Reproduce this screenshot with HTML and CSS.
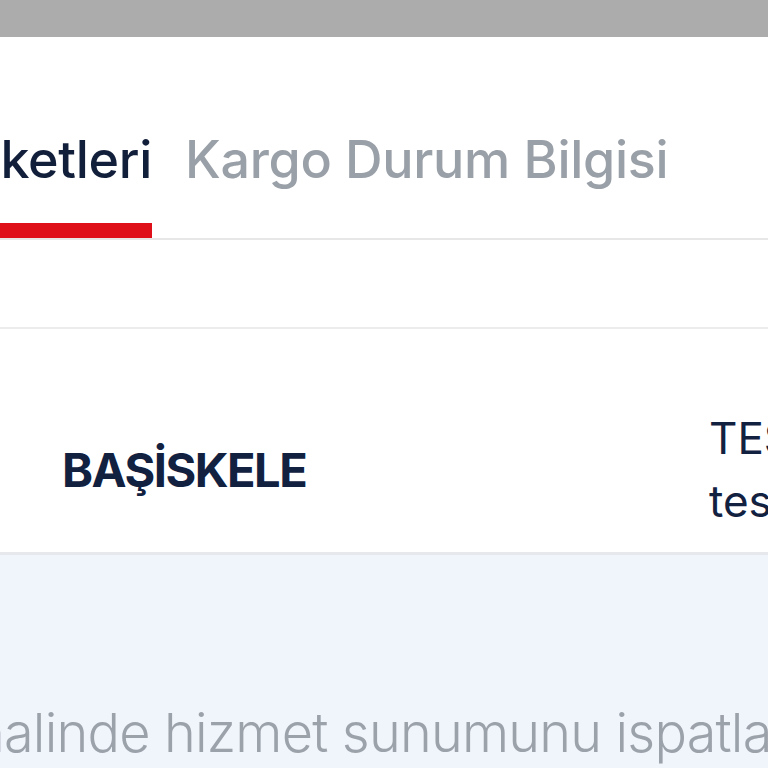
FILE: index.html
```html
<!DOCTYPE html>
<html lang="tr">
<head>
<meta charset="utf-8">
<link rel="stylesheet" href="styles.css">
</head>
<body>
<div class="topbar"></div>
<div class="tabs">
  <div class="tab active"><span>Kargo Etiketleri</span></div>
  <div class="tab">Kargo Durum Bilgisi</div>
</div>
<div class="spacer"></div>
<div class="card">
  <div class="cell-left">BAŞİSKELE</div>
  <div class="cell-right">
    <div>TEST MÜŞTERİ</div>
    <div>test adres</div>
  </div>
</div>
<div class="footer">
  <p class="note">halinde hizmet sunumunu ispatlamak</p>
</div>
</body>
</html>
```
FILE: styles.css
```css
html, body {
  margin: 0;
  padding: 0;
  width: 768px;
  height: 768px;
  overflow: hidden;
  background: #f0f4fb;
}
body {
  font-family: Inter, "Open Sans", sans-serif;
  display: flex;
  flex-direction: column;
}
.topbar {
  height: 37px;
  background: #acacac;
  flex: none;
}
.tabs {
  height: 201px;
  background: #fff;
  border-bottom: 2px solid #e7e7e7;
  display: flex;
  align-items: flex-end;
  gap: 33px;
  overflow: hidden;
  flex: none;
  white-space: nowrap;
}
.tab {
  font-size: 52px;
  font-weight: 500;
  color: #9aa0a8;
  letter-spacing: -0.3px;
  line-height: 60px;
  padding-bottom: 48px;
  flex: none;
}
.tab.active {
  width: 152px;
  display: flex;
  justify-content: flex-end;
  overflow: hidden;
  color: #121f3a;
  border-bottom: 15px solid #e0101a;
  padding-bottom: 33px;
}
.tab.active span {
  flex: none;
}
.spacer {
  height: 87px;
  background: #fff;
  border-bottom: 2px solid #ececec;
  flex: none;
}
.card {
  height: 165px;
  padding-top: 58px;
  background: #fff;
  border-bottom: 3px solid #e6e8ec;
  display: flex;
  align-items: center;
  overflow: hidden;
  flex: none;
  white-space: nowrap;
}
.cell-left {
  margin-left: 62px;
  width: 647px;
  flex: none;
  font-size: 47px;
  font-weight: 700;
  color: #12213f;
  letter-spacing: -1.5px;
}
.cell-right {
  font-size: 44px;
  color: #12213f;
  line-height: 63px;
}
.footer {
  flex: 1;
  overflow: hidden;
  display: flex;
  align-items: flex-end;
}
.note {
  margin: 0 0 0 -27px;
  white-space: nowrap;
  font-size: 54px;
  font-weight: 300;
  letter-spacing: -0.8px;
  color: #9ca2aa;
  line-height: 70px;
}
```
